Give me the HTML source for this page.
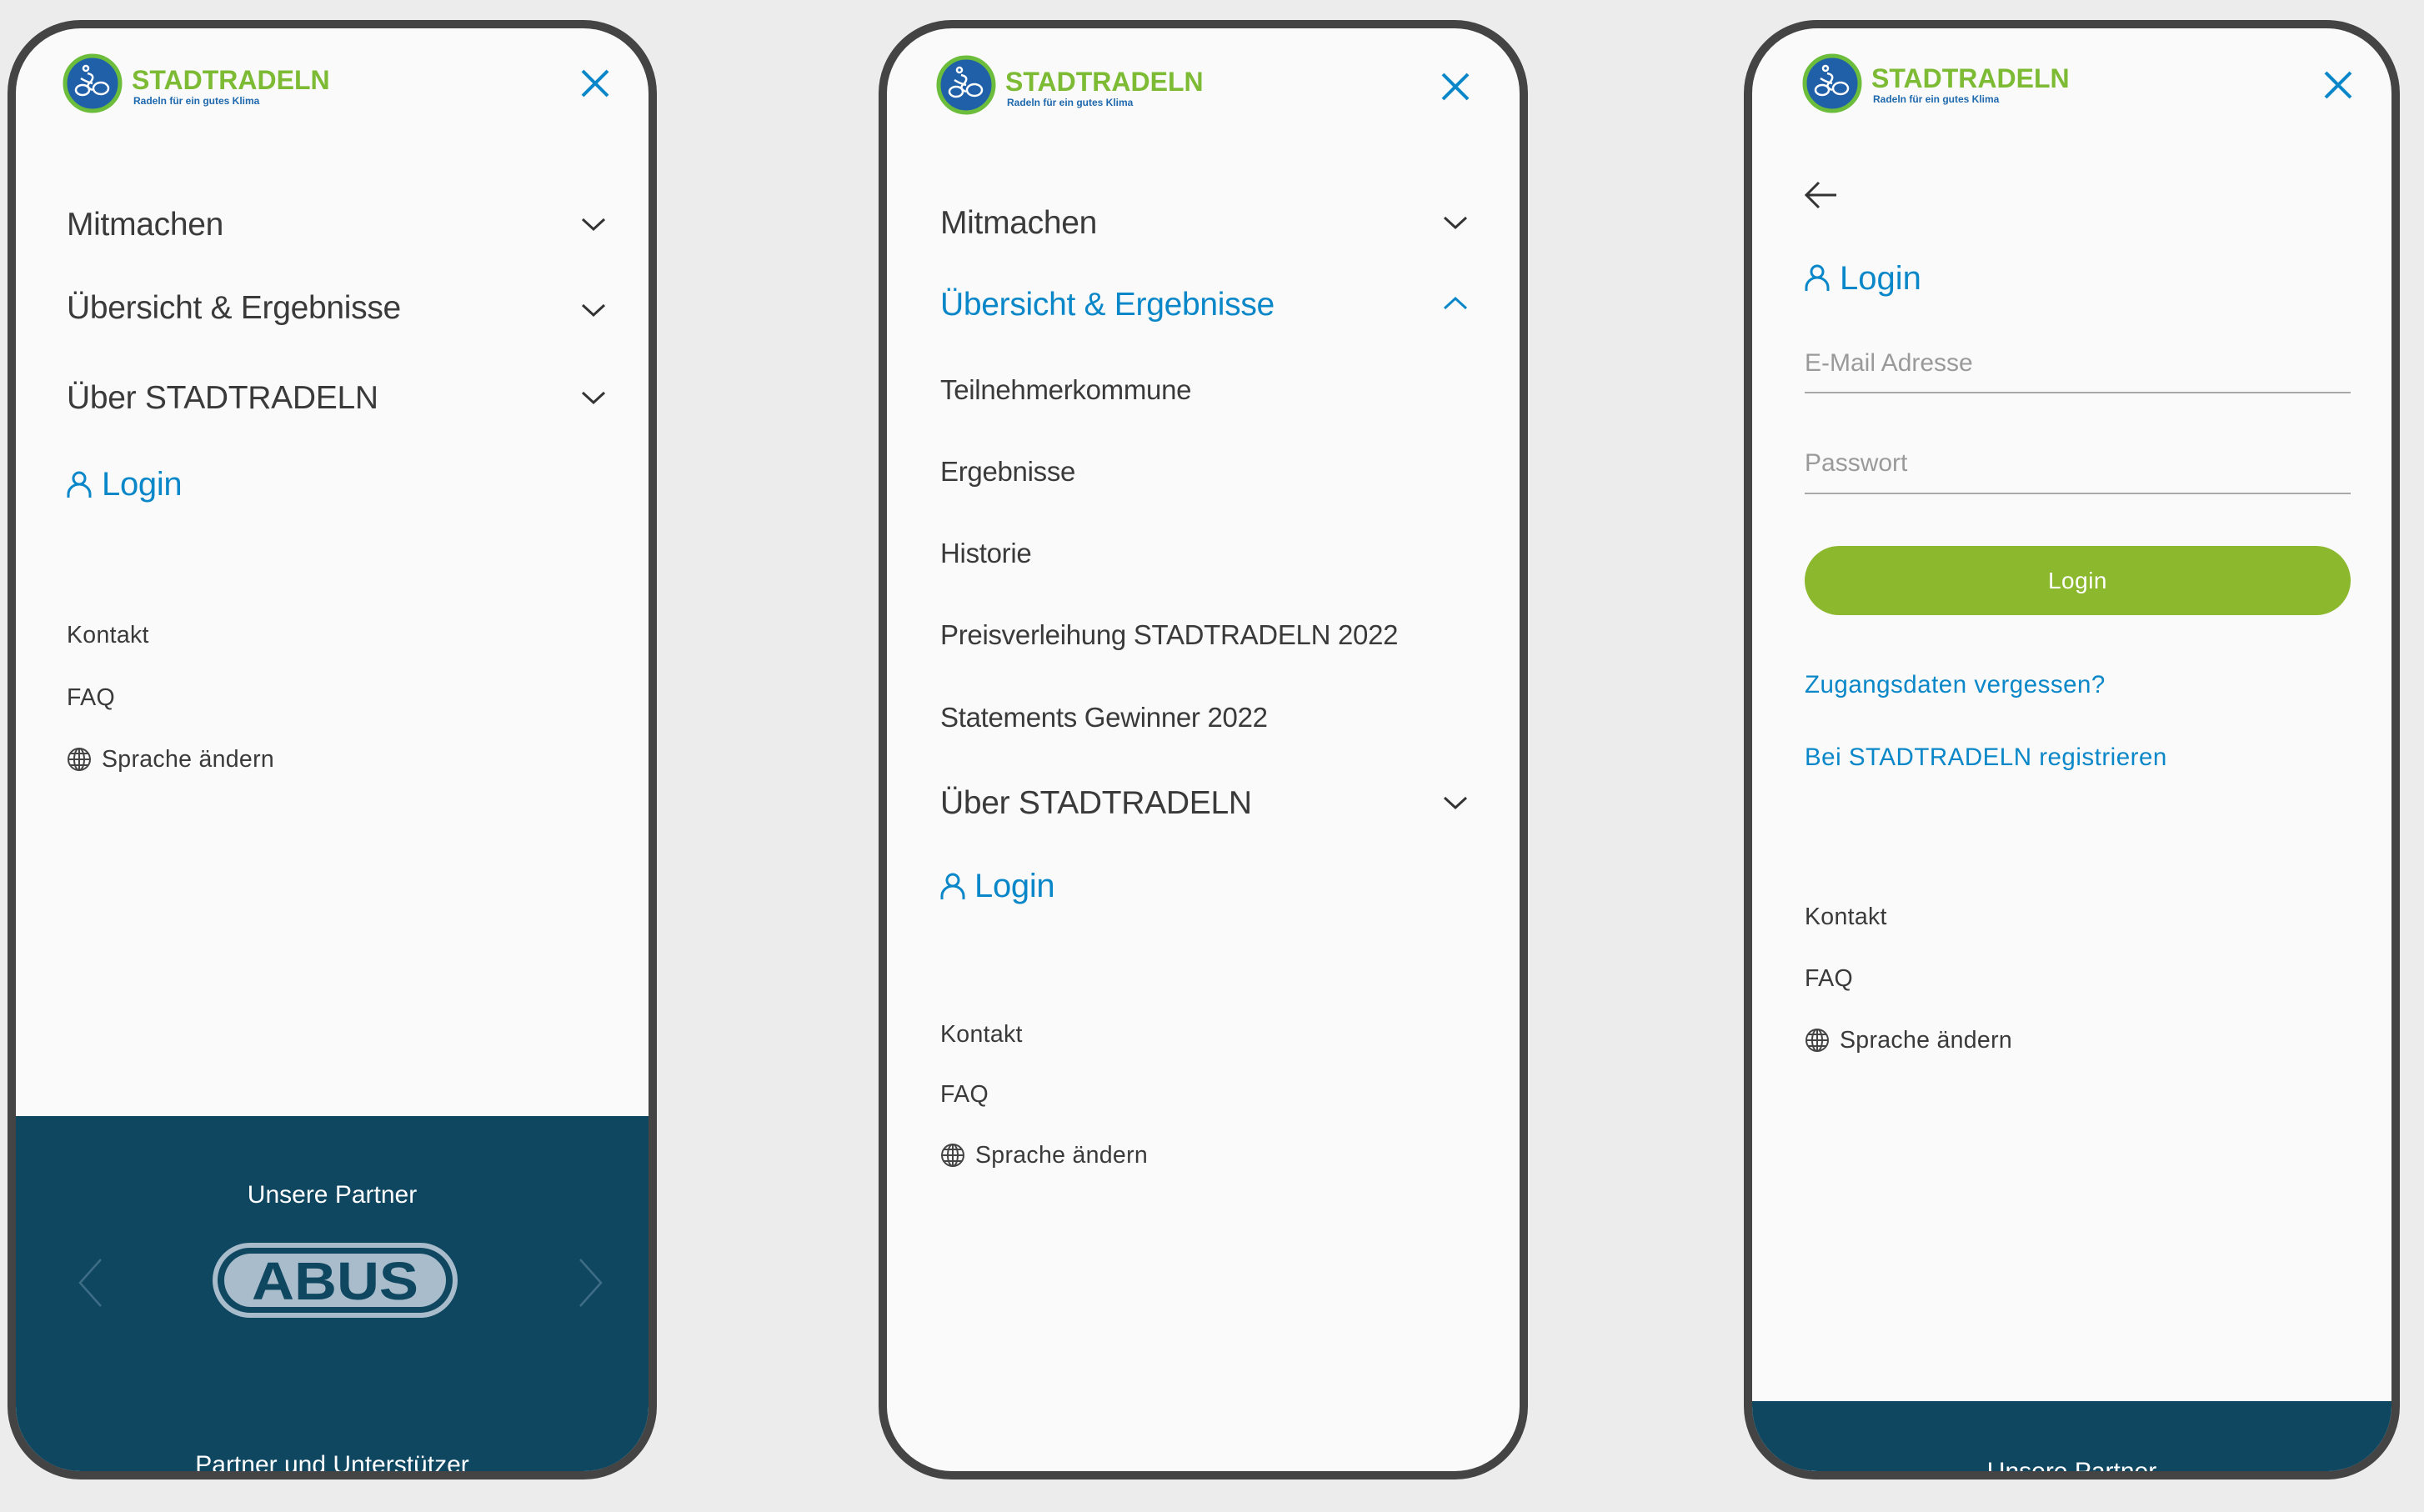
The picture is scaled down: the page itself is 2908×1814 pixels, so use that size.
<!DOCTYPE html>
<html><head><meta charset="utf-8"><style>
*{margin:0;padding:0;box-sizing:border-box}
body{width:2908px;height:1814px;background:#ececec;position:relative;overflow:hidden;font-family:"Liberation Sans",sans-serif;color:#3a3a3a}
.ph{position:absolute;border:10px solid #444;border-radius:88px;overflow:hidden;background:#fafafa}
.t{position:absolute;line-height:1;white-space:nowrap}
.big{font-size:39px;letter-spacing:-0.3px}
.sub{font-size:33px;letter-spacing:-0.3px}
.sm{font-size:28.5px;letter-spacing:0.3px}
.blue{color:#0a87c8}
.chev{position:absolute;width:32px;height:20px}
.foot{position:absolute;left:0;right:0;bottom:0;background:#0f4761}
.logo{position:absolute}
.brand{position:absolute;font-weight:bold;color:#7dbb35;font-size:32px;line-height:1;letter-spacing:0px}
.tag{position:absolute;font-weight:bold;color:#1e68ad;font-size:12px;line-height:1}
</style></head><body>

<!-- PHONE 1 -->
<div class="ph" style="left:9px;top:24px;width:779px;height:1751px">
  <svg class="logo" style="left:56px;top:30px" width="72" height="72" viewBox="0 0 72 72"><circle cx="36" cy="36" r="33" fill="#2060a8" stroke="#6cbd3b" stroke-width="5"/><g fill="none" stroke="#fff" stroke-width="2.5"><circle cx="28" cy="18" r="3"/><path d="M30 24 q10 2 4 10 q-8 6 2 10"/><ellipse cx="24" cy="44" rx="8" ry="6"/><ellipse cx="46" cy="42" rx="9" ry="7"/><path d="M22 30 q6 4 14 6"/></g></svg>
  <div class="brand" style="left:139px;top:46px">STADTRADELN</div>
  <div class="tag" style="left:141px;top:81px">Radeln für ein gutes Klima</div>
  <svg style="position:absolute;left:677px;top:48px" width="36" height="36" viewBox="0 0 36 36"><path d="M3 3L33 33M33 3L3 33" stroke="#0a87c8" stroke-width="4"/></svg>

  <div class="t big" style="left:61px;top:216px">Mitmachen</div>
  <svg class="chev" style="left:677px;top:225px" viewBox="0 0 32 20"><path d="M3 4l13 12 13-12" fill="none" stroke="#333" stroke-width="3"/></svg>
  <div class="t big" style="left:61px;top:316px">Übersicht &amp; Ergebnisse</div>
  <svg class="chev" style="left:677px;top:328px" viewBox="0 0 32 20"><path d="M3 4l13 12 13-12" fill="none" stroke="#333" stroke-width="3"/></svg>
  <div class="t big" style="left:61px;top:424px">Über STADTRADELN</div>
  <svg class="chev" style="left:677px;top:433px" viewBox="0 0 32 20"><path d="M3 4l13 12 13-12" fill="none" stroke="#333" stroke-width="3"/></svg>
  <svg style="position:absolute;left:61px;top:530px" width="30" height="34" viewBox="0 0 30 34"><circle cx="15" cy="10" r="7" fill="none" stroke="#0a87c8" stroke-width="3"/><path d="M2 33v-4a13 12 0 0 1 26 0v4" fill="none" stroke="#0a87c8" stroke-width="3"/></svg>
  <div class="t big blue" style="left:103px;top:527px;font-size:40px">Login</div>

  <div class="t sm" style="left:61px;top:714px">Kontakt</div>
  <div class="t sm" style="left:61px;top:789px">FAQ</div>
  <svg style="position:absolute;left:61px;top:862px" width="30" height="30" viewBox="0 0 30 30"><g fill="none" stroke="#444" stroke-width="2"><circle cx="15" cy="15" r="13"/><ellipse cx="15" cy="15" rx="6" ry="13"/><path d="M2 15h26M4 8h22M4 22h22M15 2v26"/></g></svg>
  <div class="t sm" style="left:103px;top:863px">Sprache ändern</div>

  <div class="foot" style="top:1305px">
    <div class="t" style="left:0;right:0;text-align:center;top:80px;font-size:30px;color:#fff">Unsere Partner</div>
    <svg style="position:absolute;left:74px;top:170px" width="30" height="60" viewBox="0 0 30 60"><path d="M28 2L3 30l25 28" fill="none" stroke="#3f6d86" stroke-width="2.5"/></svg>
    <svg style="position:absolute;left:675px;top:170px" width="30" height="60" viewBox="0 0 30 60"><path d="M2 2l25 28L2 58" fill="none" stroke="#3f6d86" stroke-width="2.5"/></svg>
    <svg style="position:absolute;left:236px;top:152px" width="294" height="90" viewBox="0 0 294 90"><rect x="3" y="3" width="288" height="84" rx="42" fill="none" stroke="#a8bccb" stroke-width="6"/><rect x="14" y="13" width="266" height="64" rx="32" fill="#a8bccb"/><text x="147" y="68" text-anchor="middle" font-family="Liberation Sans,sans-serif" font-weight="bold" font-size="64" fill="#0f4761" textLength="200" lengthAdjust="spacingAndGlyphs">ABUS</text></svg>
    <div class="t" style="left:0;right:0;text-align:center;top:404px;font-size:30px;color:#fff">Partner und Unterstützer</div>
  </div>
</div>

<!-- PHONE 2 -->
<div class="ph" style="left:1054px;top:24px;width:779px;height:1751px">
  <svg class="logo" style="left:59px;top:32px" width="72" height="72" viewBox="0 0 72 72"><circle cx="36" cy="36" r="33" fill="#2060a8" stroke="#6cbd3b" stroke-width="5"/><g fill="none" stroke="#fff" stroke-width="2.5"><circle cx="28" cy="18" r="3"/><path d="M30 24 q10 2 4 10 q-8 6 2 10"/><ellipse cx="24" cy="44" rx="8" ry="6"/><ellipse cx="46" cy="42" rx="9" ry="7"/><path d="M22 30 q6 4 14 6"/></g></svg>
  <div class="brand" style="left:142px;top:48px">STADTRADELN</div>
  <div class="tag" style="left:144px;top:83px">Radeln für ein gutes Klima</div>
  <svg style="position:absolute;left:664px;top:52px" width="36" height="36" viewBox="0 0 36 36"><path d="M3 3L33 33M33 3L3 33" stroke="#0a87c8" stroke-width="4"/></svg>

  <div class="t big" style="left:64px;top:214px">Mitmachen</div>
  <svg class="chev" style="left:666px;top:223px" viewBox="0 0 32 20"><path d="M3 4l13 12 13-12" fill="none" stroke="#333" stroke-width="3"/></svg>
  <div class="t big blue" style="left:64px;top:312px">Übersicht &amp; Ergebnisse</div>
  <svg class="chev" style="left:666px;top:320px" viewBox="0 0 32 20"><path d="M3 16l13-12 13 12" fill="none" stroke="#0a87c8" stroke-width="3"/></svg>
  <div class="t sub" style="left:64px;top:417px">Teilnehmerkommune</div>
  <div class="t sub" style="left:64px;top:515px">Ergebnisse</div>
  <div class="t sub" style="left:64px;top:613px">Historie</div>
  <div class="t sub" style="left:64px;top:711px">Preisverleihung STADTRADELN 2022</div>
  <div class="t sub" style="left:64px;top:810px">Statements Gewinner 2022</div>
  <div class="t big" style="left:64px;top:910px">Über STADTRADELN</div>
  <svg class="chev" style="left:666px;top:919px" viewBox="0 0 32 20"><path d="M3 4l13 12 13-12" fill="none" stroke="#333" stroke-width="3"/></svg>
  <svg style="position:absolute;left:64px;top:1012px" width="30" height="34" viewBox="0 0 30 34"><circle cx="15" cy="10" r="7" fill="none" stroke="#0a87c8" stroke-width="3"/><path d="M2 33v-4a13 12 0 0 1 26 0v4" fill="none" stroke="#0a87c8" stroke-width="3"/></svg>
  <div class="t big blue" style="left:105px;top:1009px;font-size:40px">Login</div>

  <div class="t sm" style="left:64px;top:1193px">Kontakt</div>
  <div class="t sm" style="left:64px;top:1265px">FAQ</div>
  <svg style="position:absolute;left:64px;top:1337px" width="30" height="30" viewBox="0 0 30 30"><g fill="none" stroke="#444" stroke-width="2"><circle cx="15" cy="15" r="13"/><ellipse cx="15" cy="15" rx="6" ry="13"/><path d="M2 15h26M4 8h22M4 22h22M15 2v26"/></g></svg>
  <div class="t sm" style="left:106px;top:1338px">Sprache ändern</div>
</div>

<!-- PHONE 3 -->
<div class="ph" style="left:2092px;top:24px;width:787px;height:1751px">
  <svg class="logo" style="left:60px;top:30px" width="72" height="72" viewBox="0 0 72 72"><circle cx="36" cy="36" r="33" fill="#2060a8" stroke="#6cbd3b" stroke-width="5"/><g fill="none" stroke="#fff" stroke-width="2.5"><circle cx="28" cy="18" r="3"/><path d="M30 24 q10 2 4 10 q-8 6 2 10"/><ellipse cx="24" cy="44" rx="8" ry="6"/><ellipse cx="46" cy="42" rx="9" ry="7"/><path d="M22 30 q6 4 14 6"/></g></svg>
  <div class="brand" style="left:143px;top:44px">STADTRADELN</div>
  <div class="tag" style="left:145px;top:79px">Radeln für ein gutes Klima</div>
  <svg style="position:absolute;left:685px;top:50px" width="36" height="36" viewBox="0 0 36 36"><path d="M3 3L33 33M33 3L3 33" stroke="#0a87c8" stroke-width="4"/></svg>

  <svg style="position:absolute;left:62px;top:182px" width="40" height="36" viewBox="0 0 40 36"><path d="M18 3L3 18l15 15M3 18h36" fill="none" stroke="#333" stroke-width="3"/></svg>
  <svg style="position:absolute;left:63px;top:282px" width="30" height="34" viewBox="0 0 30 34"><circle cx="15" cy="10" r="7" fill="none" stroke="#0a87c8" stroke-width="3"/><path d="M2 33v-4a13 12 0 0 1 26 0v4" fill="none" stroke="#0a87c8" stroke-width="3"/></svg>
  <div class="t blue" style="left:105px;top:280px;font-size:40px">Login</div>

  <div class="t" style="left:63px;top:387px;font-size:30px;color:#9a9a9a">E-Mail Adresse</div>
  <div style="position:absolute;left:63px;top:436px;width:655px;height:2px;background:#a8a8a8"></div>
  <div class="t" style="left:63px;top:507px;font-size:30px;color:#9a9a9a">Passwort</div>
  <div style="position:absolute;left:63px;top:557px;width:655px;height:2px;background:#a8a8a8"></div>
  <div style="position:absolute;left:63px;top:621px;width:655px;height:83px;border-radius:42px;background:#8bb82d;color:#fff;font-size:28px;text-align:center;line-height:83px;letter-spacing:0.5px">Login</div>

  <div class="t blue" style="left:63px;top:773px;font-size:29.5px;letter-spacing:0.5px">Zugangsdaten vergessen?</div>
  <div class="t blue" style="left:63px;top:860px;font-size:29.5px;letter-spacing:0.5px">Bei STADTRADELN registrieren</div>

  <div class="t sm" style="left:63px;top:1052px">Kontakt</div>
  <div class="t sm" style="left:63px;top:1126px">FAQ</div>
  <svg style="position:absolute;left:63px;top:1199px" width="30" height="30" viewBox="0 0 30 30"><g fill="none" stroke="#444" stroke-width="2"><circle cx="15" cy="15" r="13"/><ellipse cx="15" cy="15" rx="6" ry="13"/><path d="M2 15h26M4 8h22M4 22h22M15 2v26"/></g></svg>
  <div class="t sm" style="left:105px;top:1200px">Sprache ändern</div>

  <div class="foot" style="top:1647px">
    <div class="t" style="left:0;right:0;text-align:center;top:70px;font-size:30px;color:#fff">Unsere Partner</div>
  </div>
</div>
</body></html>
